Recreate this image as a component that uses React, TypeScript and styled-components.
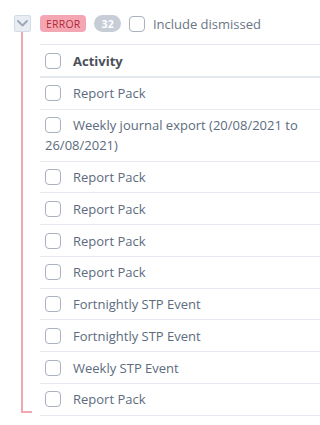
import styled, { createGlobalStyle } from 'styled-components';

const GlobalStyle = createGlobalStyle`
  body {
    margin: 0;
    background: #fff;
    font-family: "Open Sans", "Liberation Sans", sans-serif;
  }
`;

const Wrapper = styled.div`
  display: flex;
  padding: 15px 0 0 14px;
  height: 425px;
  box-sizing: border-box;
  overflow: hidden;
`;

const Side = styled.div`
  display: flex;
  flex-direction: column;
  width: 26px;
  flex-shrink: 0;
  height: 398px;
`;

const ToggleButton = styled.button`
  width: 17px;
  height: 17px;
  padding: 0;
  border: 1px solid #d3dbe6;
  border-radius: 2px;
  background: #e8edf4;
  display: flex;
  align-items: center;
  justify-content: center;
  box-sizing: border-box;
`;

const Rail = styled.div`
  flex: 1;
  width: 9px;
  margin-left: 7px;
  border-left: 2px solid #f0a7b1;
  border-bottom: 2px solid #f0a7b1;
`;

const Main = styled.div`
  flex: 1;
  min-width: 0;
`;

const TopBar = styled.div`
  display: flex;
  align-items: center;
  height: 17px;
  gap: 8px;
  margin-bottom: 12px;
`;

const Badge = styled.span<{ $tone: 'error' | 'count' }>`
  display: inline-flex;
  align-items: center;
  justify-content: center;
  height: 17px;
  border-radius: ${(p) => (p.$tone === 'error' ? '4px' : '9px')};
  padding: 0 ${(p) => (p.$tone === 'error' ? '6px' : '7px')};
  font-size: 10.5px;
  font-weight: ${(p) => (p.$tone === 'error' ? 400 : 700)};
  background: ${(p) => (p.$tone === 'error' ? '#f4a7b2' : '#c6cdd7')};
  color: ${(p) => (p.$tone === 'error' ? '#b3273a' : '#ffffff')};
  letter-spacing: 0.2px;
`;

const Box = styled.span`
  display: inline-block;
  width: 16px;
  height: 16px;
  border: 1px solid #a9b2be;
  border-radius: 4px;
  box-sizing: border-box;
  background: #fff;
  vertical-align: -3px;
`;

const Label = styled.label`
  display: flex;
  align-items: center;
  gap: 8px;
  color: #6b7585;
  font-size: 13px;
`;

const Table = styled.div`
  border-top: 1px solid #e6eaf0;
`;

const HeaderRow = styled.div`
  display: flex;
  align-items: center;
  height: 31px;
  padding-left: 5px;
  border-bottom: 2px solid #e3e8ef;
  color: #4a4f58;
  font-weight: 700;
  font-size: 13px;
`;

const Row = styled.div`
  padding: 5.4px 14px 5.4px 5px;
  border-bottom: 1px solid #e6eaf0;
  line-height: 20px;
  font-size: 13px;
  color: #5c6b7e;
`;

const RowBox = styled(Box)`
  margin-right: 12px;
`;

const Chevron = () => (
  <svg width="11" height="7" viewBox="0 0 11 7">
    <path d="M1 1l4.5 4.5L10 1" fill="none" stroke="#9aa7b8" strokeWidth="1.8" strokeLinecap="round" strokeLinejoin="round" />
  </svg>
);

const activities = [
  'Report Pack',
  'Weekly journal export (20/08/2021 to 26/08/2021)',
  'Report Pack',
  'Report Pack',
  'Report Pack',
  'Report Pack',
  'Fortnightly STP Event',
  'Fortnightly STP Event',
  'Weekly STP Event',
  'Report Pack',
];

export default function App() {
  return (
    <>
      <GlobalStyle />
      <Wrapper>
        <Side>
          <ToggleButton>
            <Chevron />
          </ToggleButton>
          <Rail />
        </Side>
        <Main>
          <TopBar>
            <Badge $tone="error">ERROR</Badge>
            <Badge $tone="count">32</Badge>
            <Label>
              <Box />
              Include dismissed
            </Label>
          </TopBar>
          <Table>
            <HeaderRow>
              <RowBox />
              Activity
            </HeaderRow>
            {activities.map((name, i) => (
              <Row key={i}>
                <RowBox />
                {name}
              </Row>
            ))}
          </Table>
        </Main>
      </Wrapper>
    </>
  );
}
